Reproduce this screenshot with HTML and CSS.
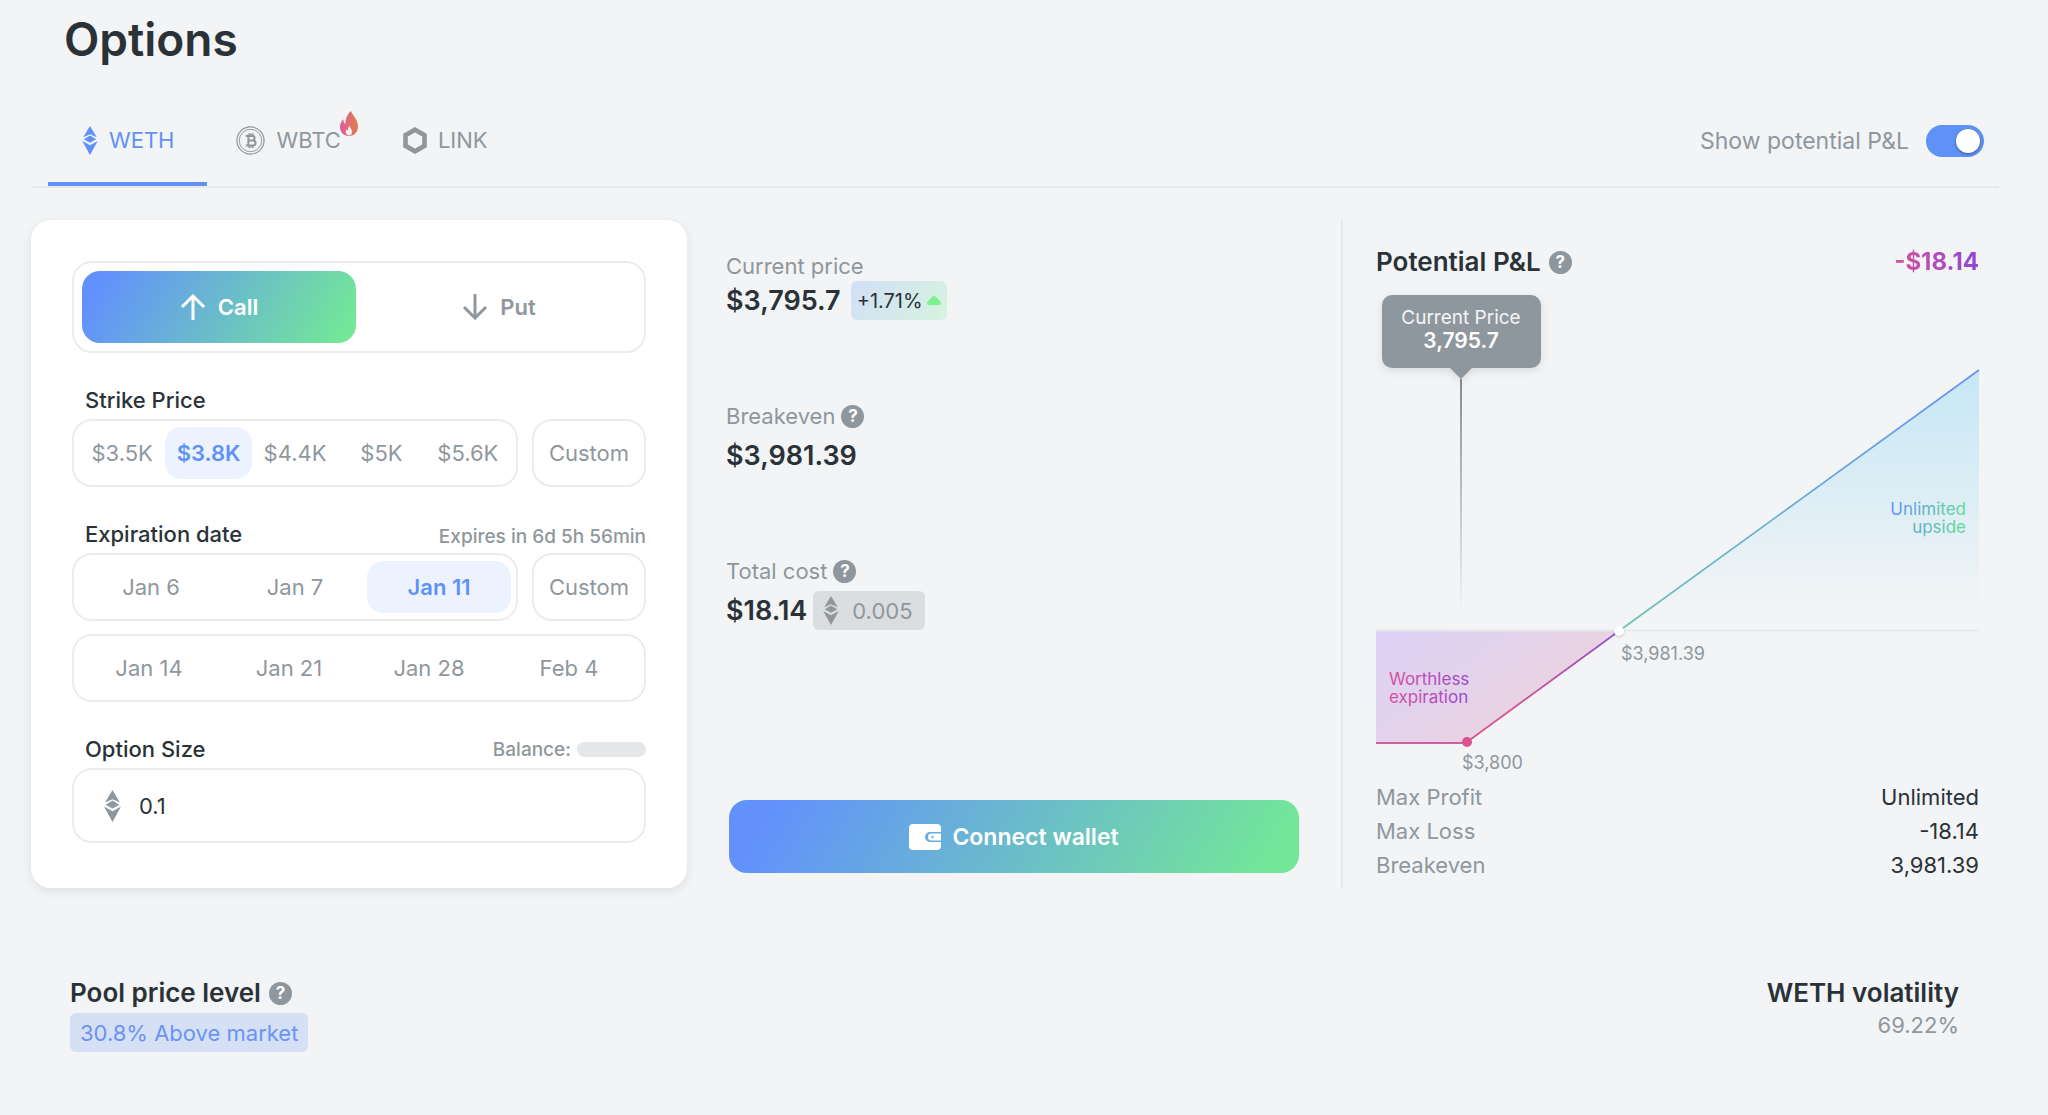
FILE: index.html
```
<!DOCTYPE html>
<html lang="en">
<head>
<meta charset="utf-8">
<meta name="viewport" content="width=device-width, initial-scale=1">
<title>Options</title>
<link rel="stylesheet" href="styles.css">
</head>
<body>
<svg class="defs" aria-hidden="true">
  <symbol id="eth" viewBox="0 0 16 30">
    <path d="M8 0 15 11.6 8 8.6 1 11.6Z"/>
    <path d="M8 9.9 14.4 13.8 8 17.4 1.6 13.8Z"/>
    <path d="M0 15.4 8 20 16 15.4 8 30Z"/>
  </symbol>
</svg>
<div class="page">
  <h1 class="title">Options</h1>

  <div class="bar">
    <nav class="tabs" aria-label="Assets">
      <button class="tab tab-active" type="button"><svg class="ico-eth" aria-hidden="true"><use href="#eth"/></svg>WETH</button>
      <button class="tab" type="button">
        <svg class="ico-btc" viewBox="0 0 30 30" aria-hidden="true" fill="none" stroke="currentColor">
          <circle cx="15" cy="15" r="14" stroke-width="1.3"/>
          <circle cx="15" cy="15" r="11.6" stroke-width="1"/>
          <path d="M10.2 10.2h6.6a2.400 2.400 0 0 1 0 4.800h-4 4.800a2.600 2.600 0 0 1 0 5.200h-7.400M12.800 10.200v10M14 7.600v2.600M17 7.600v2.600M14 20.200v2.600M17 20.200v2.600" stroke-width="2.100"/>
        </svg>
        <span class="tab-name">WBTC
          <svg class="ico-fire" viewBox="0 0 18 25" aria-hidden="true">
            <defs><linearGradient id="fire" x1="0" x2="1"><stop offset="0" stop-color="#e35aa0"/><stop offset="1" stop-color="#dd8048"/></linearGradient></defs>
            <path fill="url(#fire)" d="M11 0c1.500 4.500 7 8.500 7 15.500 0 5.500-3.500 9.500-9 9.500s-9-4-9-9c0-3 1.500-6.500 3.500-7.800-.3 2.300.5 4 1.900 4.800C5.500 8 7.500 2.500 11 0Z"/>
            <path fill="#f2f4f5" d="M9.400 15c1 2.200 2.600 3.500 2.600 6 0 2-1.200 3.300-3 3.300s-3.200-1.300-3.200-3.200c0-1.100.5-2.200 1.200-2.900.2.700.5 1.200 1.100 1.500-.1-1.700.3-3.500 1.300-4.700Z"/>
          </svg>
        </span>
      </button>
      <button class="tab" type="button">
        <svg class="ico-link" viewBox="0 0 24 27" aria-hidden="true"><path fill="none" stroke="currentColor" stroke-width="4.600" d="M12 2.700 21.500 8.200v10.600L12 24.300 2.500 18.800V8.200Z"/></svg>LINK
      </button>
    </nav>
    <label class="switch">Show potential P&amp;L <input class="switch-input" type="checkbox" role="switch" checked></label>
  </div>

  <main class="columns">
    <form class="card">
      <div class="box sides">
        <button class="side side-active" type="button"><svg class="arrow" viewBox="0 0 26 26" aria-hidden="true"><path d="M13 26V2M2 13 13 2l11 11"/></svg>Call</button>
        <button class="side" type="button"><svg class="arrow" viewBox="0 0 26 26" aria-hidden="true"><path d="M13 0v24M2 13l11 11 11-11"/></svg>Put</button>
      </div>

      <section class="field">
        <div class="field-head"><h2 class="label">Strike Price</h2></div>
        <div class="field-row">
          <div class="box picks">
            <button class="pick" type="button">$3.5K</button>
            <button class="pick pick-active" type="button">$3.8K</button>
            <button class="pick" type="button">$4.4K</button>
            <button class="pick" type="button">$5K</button>
            <button class="pick" type="button">$5.6K</button>
          </div>
          <button class="box custom" type="button">Custom</button>
        </div>
      </section>

      <section class="field">
        <div class="field-head"><h2 class="label">Expiration date</h2><span class="hint">Expires in 6d 5h 56min</span></div>
        <div class="field-row">
          <div class="box picks">
            <button class="pick" type="button">Jan 6</button>
            <button class="pick" type="button">Jan 7</button>
            <button class="pick pick-active" type="button">Jan 11</button>
          </div>
          <button class="box custom" type="button">Custom</button>
        </div>
        <div class="box picks picks-more">
          <button class="pick" type="button">Jan 14</button>
          <button class="pick" type="button">Jan 21</button>
          <button class="pick" type="button">Jan 28</button>
          <button class="pick" type="button">Feb 4</button>
        </div>
      </section>

      <section class="field">
        <div class="field-head"><label class="label" for="size">Option Size</label><span class="hint hint-balance">Balance: <span class="skeleton"></span></span></div>
        <div class="box amount">
          <svg class="ico-eth" aria-hidden="true"><use href="#eth"/></svg>
          <input class="amount-input" id="size" type="text" inputmode="decimal" value="0.1">
        </div>
      </section>
    </form>

    <section class="summary">
      <div class="stats">
        <div class="stat">
          <div class="stat-name">Current price</div>
          <div class="stat-row"><strong class="stat-value">$3,795.7</strong><span class="badge badge-up">+1.71%<svg class="ico-up" viewBox="0 0 14 9" aria-hidden="true"><path d="M7 0c.7 0 1.200.2 1.700.7l4.600 4.800c1.300 1.500.5 3.500-1.400 3.500H2.100C.2 9-.6 7 .7 5.500L5.300.7C5.800.2 6.300 0 7 0Z"/></svg></span></div>
        </div>
        <div class="stat stat-spaced">
          <div class="stat-name">Breakeven <button class="help" type="button" aria-label="About breakeven">?</button></div>
          <div class="stat-row"><strong class="stat-value">$3,981.39</strong></div>
        </div>
        <div class="stat stat-spaced">
          <div class="stat-name">Total cost <button class="help" type="button" aria-label="About total cost">?</button></div>
          <div class="stat-row stat-row-tight"><strong class="stat-value">$18.14</strong><span class="badge badge-eth"><svg class="ico-eth" aria-hidden="true"><use href="#eth"/></svg>0.005</span></div>
        </div>
      </div>
      <button class="connect" type="button">
        <svg class="ico-wallet" viewBox="0 0 32 26" aria-hidden="true">
          <path fill="#fff" d="M4 0h24a4 4 0 0 1 4 4v4H21a5 5 0 0 0 0 10h11v4a4 4 0 0 1-4 4H4a4 4 0 0 1-4-4V4a4 4 0 0 1 4-4Z"/>
          <path fill="#fff" d="M22.500 9.500H32v7h-9.500a3.500 3.500 0 0 1 0-7Z"/>
          <circle cx="23.500" cy="13" r="1.200" fill="#6bb8cc"/>
        </svg>
        Connect wallet
      </button>
    </section>

    <section class="pnl">
      <div class="pnl-head">
        <h2 class="heading">Potential P&amp;L <button class="help" type="button" aria-label="About potential P&amp;L">?</button></h2>
        <strong class="pnl-value">-$18.14</strong>
      </div>
      <svg class="chart" viewBox="0 0 603 497" role="img" aria-label="Profit and loss by price">
        <defs>
          <linearGradient id="up" x1="0" y1="0" x2="0" y2="1"><stop offset="0" stop-color="#c6e7f6"/><stop offset=".92" stop-color="#c6e7f6" stop-opacity="0"/></linearGradient>
          <linearGradient id="down" x1="0" y1="0" x2="1" y2=".6"><stop offset="0" stop-color="#dcd1f6"/><stop offset="1" stop-color="#edd4dd"/></linearGradient>
          <linearGradient id="upline" x1="1" y1="0" x2="0" y2="1"><stop offset="0" stop-color="#6690f6"/><stop offset="1" stop-color="#6dc3b8"/></linearGradient>
          <linearGradient id="downline" x1="1" y1="0" x2="0" y2="1"><stop offset="0" stop-color="#9150cf"/><stop offset=".7" stop-color="#d0568f"/><stop offset="1" stop-color="#d95690"/></linearGradient>
          <linearGradient id="marker" gradientUnits="userSpaceOnUse" x1="0" y1="96" x2="0" y2="328"><stop offset="0" stop-color="#858c92"/><stop offset="1" stop-color="#858c92" stop-opacity="0"/></linearGradient>
          <linearGradient id="cool"><stop offset="0" stop-color="#6690fb"/><stop offset="1" stop-color="#62dc96"/></linearGradient>
          <linearGradient id="cool2"><stop offset="0" stop-color="#61adc9"/><stop offset="1" stop-color="#62dc96"/></linearGradient>
          <linearGradient id="warm"><stop offset="0" stop-color="#d9549a"/><stop offset="1" stop-color="#9748d4"/></linearGradient>
        </defs>
        <path fill="url(#up)" d="M243 348 603 88V348Z"/>
        <path fill="url(#down)" d="M0 348H243L91 459H0Z"/>
        <path class="axis" d="M0 347.500H603"/>
        <path fill="none" stroke="url(#upline)" stroke-width="1.700" d="M243 348 603 87"/>
        <path fill="none" stroke="#d05f9c" stroke-width="2" d="M0 460H92"/>
        <path fill="none" stroke="url(#downline)" stroke-width="1.700" d="M91 459 243 348"/>
        <circle class="dot" cx="243" cy="348" r="5"/>
        <circle cx="91" cy="459" r="5" fill="#d9538f"/>
        <path fill="url(#marker)" d="M84 96h2v232h-2Z"/>
        <path class="tip" d="M16 12H155a10 10 0 0 1 10 10V75a10 10 0 0 1-10 10H96L85 96 74 85H16A10 10 0 0 1 6 75V22A10 10 0 0 1 16 12Z" />
        <text class="tip-name" x="85" y="41">Current Price</text>
        <text class="tip-value" x="85" y="65">3,795.7</text>
        <text class="note note-end" x="590" y="232" fill="url(#cool)">Unlimited</text>
        <text class="note note-end" x="590" y="250" fill="url(#cool2)">upside</text>
        <text class="note" x="13" y="402" fill="url(#warm)">Worthless</text>
        <text class="note" x="13" y="420" fill="url(#warm)">expiration</text>
        <text class="tick" x="245" y="377">$3,981.39</text>
        <text class="tick" x="86" y="486">$3,800</text>
      </svg>
      <dl class="facts">
        <div class="fact"><dt>Max Profit</dt><dd>Unlimited</dd></div>
        <div class="fact"><dt>Max Loss</dt><dd>-18.14</dd></div>
        <div class="fact"><dt>Breakeven</dt><dd>3,981.39</dd></div>
      </dl>
    </section>
  </main>

  <footer class="market">
    <div class="market-item">
      <h2 class="heading">Pool price level <button class="help" type="button" aria-label="About pool price level">?</button></h2>
      <span class="badge badge-level">30.8% Above market</span>
    </div>
    <div class="market-item market-end">
      <h2 class="heading">WETH volatility</h2>
      <span class="volatility">69.22%</span>
    </div>
  </footer>
</div>
</body>
</html>
```
FILE: styles.css
```
:root {
  --ink: #2a3238;
  --muted: #8f979d;
  --line: #e6e8ea;
  --blue: #5f92f6;
  --page: #f2f4f5;
  --cool: linear-gradient(121deg, #6291fc 8%, #73e699 94%);
}

* { box-sizing: border-box; }

body {
  margin: 0;
  background: var(--page);
  color: var(--ink);
  font: 400 22px/30px Inter, "Open Sans", sans-serif;
}

button, input { font: inherit; color: inherit; }
button { border: 0; background: none; padding: 0; cursor: pointer; }
h1, h2, dl, dd { margin: 0; }

.defs { position: absolute; width: 0; height: 0; }
.page { padding: 11px 49px 60px 31px; }
.title { margin-left: 33px; font-size: 46px; font-weight: 600; line-height: 56px; }

/* Asset tabs */
.bar {
  display: flex;
  justify-content: space-between;
  margin: 29px 0 32px;
  padding: 0 15px 0 17px;
  border-bottom: 2px solid var(--line);
}
.tabs { display: flex; }
.tab {
  display: flex;
  align-items: center;
  gap: 11px;
  height: 90px;
  padding: 0 33px 0 29px;
  color: var(--muted);
  border-bottom: 4px solid transparent;
  border-top: 2px solid transparent;
}
.tab-active { padding-left: 34px; color: var(--blue); border-bottom-color: var(--blue); }
.tab-name { position: relative; }
.ico-eth { width: 16px; height: 29px; fill: currentColor; }
.ico-btc { width: 29px; height: 29px; }
.ico-link { width: 24px; height: 27px; }
.ico-fire { position: absolute; right: -17px; top: -14px; width: 18px; height: 25px; }

.switch { display: flex; align-items: center; gap: 17px; color: var(--muted); font-size: 23px; }
.switch-input {
  appearance: none;
  display: flex;
  align-items: center;
  justify-content: flex-end;
  width: 58px;
  height: 32px;
  margin: 0;
  padding: 4px;
  border-radius: 16px;
  background: var(--blue);
}
.switch-input::before {
  content: "";
  width: 24px;
  height: 24px;
  border-radius: 50%;
  background: #fff;
  box-shadow: 0 1px 3px rgba(0, 0, 0, .4);
}

.columns { display: grid; grid-template-columns: repeat(3, minmax(0, 1fr)); }

/* Order form */
.card {
  padding: 41px 41px 45px;
  border-radius: 20px;
  background: #fff;
  box-shadow: 0 3px 10px rgba(40, 50, 60, .1);
}
.box { border: 2px solid #ececed; border-radius: 20px; }
.sides { display: grid; grid-template-columns: 1fr 1fr; gap: 6px; padding: 8px; }
.side {
  display: flex;
  align-items: center;
  justify-content: center;
  gap: 12px;
  height: 72px;
  border-radius: 18px;
  color: var(--muted);
  font-weight: 600;
}
.side-active { background: var(--cool); color: #fff; }
.arrow { width: 26px; height: 26px; fill: none; stroke: currentColor; stroke-width: 3; }

.field { margin-top: 32px; }
.field-head { display: flex; justify-content: space-between; margin-bottom: 4px; padding-left: 13px; }
.label { font-size: 22px; font-weight: 500; }
.hint { padding-top: 5px; font-size: 19px; font-weight: 500; line-height: 25px; color: var(--muted); }
.hint-balance { display: flex; align-items: center; gap: 6px; padding: 0; }
.skeleton { width: 69px; height: 15px; border-radius: 8px; background: #e6e7e9; }
.field-row { display: grid; grid-template-columns: minmax(0, 1fr) 114px; gap: 14px; }
.picks { display: flex; height: 68px; padding: 6px 5px; }
.picks-more { margin-top: 13px; }
.pick { flex: 1 1 0; border-radius: 16px; color: var(--muted); }
.pick-active { background: #edf3fe; color: var(--blue); font-weight: 600; }
.custom { color: var(--muted); }
.amount { display: flex; align-items: center; gap: 18px; height: 75px; padding: 0 30px; color: var(--muted); }
.amount .ico-eth { width: 17px; height: 32px; }
.amount-input { flex: 1; min-width: 0; padding: 0; border: 0; background: none; color: var(--ink); outline: 0; }

/* Price summary */
.summary {
  display: flex;
  flex-direction: column;
  justify-content: space-between;
  padding: 31px 39px 15px;
  border-right: 2px solid var(--line);
}
.stats { display: grid; gap: 81px; }
.stat { display: grid; }
.stat-spaced { gap: 5px; }
.stat-name { display: flex; align-items: center; gap: 6px; color: var(--muted); }
.stat-row { display: flex; align-items: center; gap: 10px; height: 39px; }
.stat-row-tight { gap: 6px; }
.stat-value { font-size: 27px; font-weight: 600; }
.help {
  width: 23px;
  height: 23px;
  border-radius: 50%;
  background: #8f979e;
  color: #fff;
  font-size: 17px;
  font-weight: 700;
  line-height: 23px;
}
.badge { display: inline-flex; align-items: center; height: 39px; border-radius: 6px; }
.badge-up { gap: 4px; padding: 0 6px; background: linear-gradient(121deg, #d2dff8, #d6f3df); font-size: 20px; }
.ico-up { width: 14px; height: 9px; fill: #7df08f; }
.badge-eth { gap: 13px; padding: 0 12px 0 10px; background: #dadee0; color: var(--muted); }
.badge-level { padding: 0 10px; background: #d6e0f5; color: #6b93f3; }

.connect {
  display: flex;
  align-items: center;
  justify-content: center;
  gap: 11px;
  height: 73px;
  margin: 0 3px;
  border-radius: 18px;
  background: var(--cool);
  color: #fff;
  font-size: 23px;
  font-weight: 600;
}
.ico-wallet { width: 32px; height: 26px; }

/* Profit and loss */
.pnl { padding: 26px 20px 0 33px; }
.pnl-head { display: flex; align-items: center; justify-content: space-between; margin-bottom: 5px; }
.heading { display: flex; align-items: center; gap: 8px; font-size: 26px; font-weight: 600; line-height: 32px; }
.pnl-value {
  background: linear-gradient(90deg, #d3559a, #8f45dc);
  background-clip: text;
  color: transparent;
  font-size: 24px;
  font-weight: 700;
}
.chart { display: block; width: 100%; height: auto; overflow: visible; }
.axis { stroke: var(--line); stroke-width: 2; }
.dot { fill: #fff; filter: drop-shadow(0 1px 1px rgba(0, 0, 0, .2)); }
.tip { fill: #8f979e; filter: drop-shadow(0 3px 4px rgba(0, 0, 0, .1)); }
.tip-name { fill: #f3f5f6; font-size: 19px; text-anchor: middle; }
.tip-value { fill: #fff; font-size: 21px; font-weight: 600; text-anchor: middle; }
.note { font-size: 17px; }
.note-end { text-anchor: end; }
.tick { fill: var(--muted); font-size: 18px; }
.fact { display: flex; justify-content: space-between; line-height: 34px; }
.fact dt { color: var(--muted); }

/* Market state */
.market { display: flex; justify-content: space-between; padding: 89px 40px 0 39px; }
.market-item { display: flex; flex-direction: column; align-items: flex-start; gap: 4px; }
.market-end { align-items: flex-end; gap: 1px; }
.volatility { color: var(--muted); }
```
